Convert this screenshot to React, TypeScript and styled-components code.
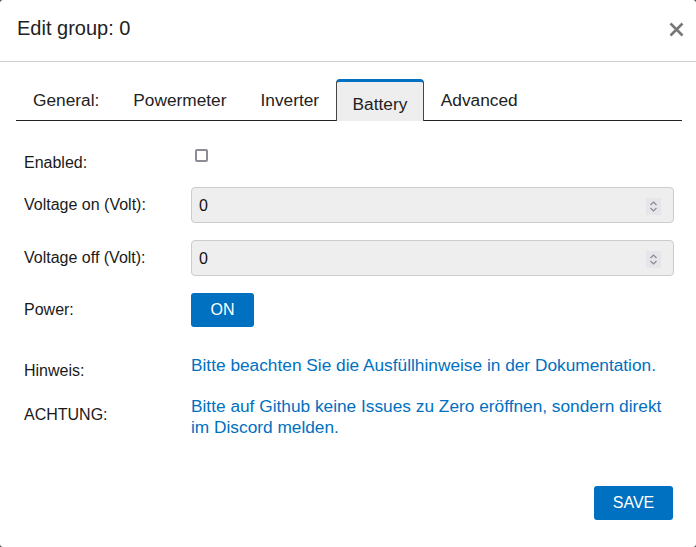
import React from "react";
import styled, { createGlobalStyle } from "styled-components";

const Global = createGlobalStyle`
  html, body { margin: 0; padding: 0; background: #3a3a3a; }
  body { font-family: "Liberation Sans", Arial, sans-serif; }
  * { box-sizing: border-box; }
`;

const Dialog = styled.div`
  width: 696px;
  height: 547px;
  background: #fff;
  border-radius: 3px;
  display: flex;
  flex-direction: column;
  color: #1a1a1a;
`;

const Header = styled.div`
  height: 62px;
  display: flex;
  align-items: center;
  justify-content: space-between;
  padding: 0 10px 4px 17px;
  border-bottom: 1px solid #d0d0d0;
`;

const Title = styled.h2`
  margin: 0;
  font-size: 20px;
  font-weight: normal;
  color: #222;
`;

const Close = styled.button`
  border: 0;
  background: none;
  padding: 0;
  width: 20px;
  height: 20px;
  display: flex;
  align-items: center;
  justify-content: center;
  cursor: pointer;
  margin-top: 1px;
`;

const Body = styled.div`
  padding: 17px 14px 0 16px;
  flex: 1;
  display: flex;
  flex-direction: column;
`;

const TabBar = styled.div`
  display: flex;
  align-items: flex-end;
  height: 42px;
  border-bottom: 1px solid #222;
`;

const Tab = styled.div<{ $active?: boolean }>`
  height: ${(p) => (p.$active ? "42px" : "41px")};
  padding: 0 ${(p) => (p.$active ? "15.5px" : "17px")};
  font-size: 17.3px;
  white-space: nowrap;
  display: flex;
  align-items: center;
  color: #222;
  background: ${(p) => (p.$active ? "#eeeeee" : "transparent")};
  border-top: ${(p) => (p.$active ? "3px solid #0070c0" : "none")};
  border-left: ${(p) => (p.$active ? "1px solid #444" : "none")};
  border-right: ${(p) => (p.$active ? "1px solid #444" : "none")};
  border-radius: ${(p) => (p.$active ? "4px 4px 0 0" : "0")};
  margin-bottom: -1px;
  padding-top: ${(p) => (p.$active ? "5px" : "0")};
`;

const Form = styled.div`
  display: flex;
  flex-direction: column;
  padding: 0 0 0 8px;
`;

const Row = styled.div<{ $h: number; $mt: number }>`
  display: flex;
  align-items: center;
  height: ${(p) => p.$h}px;
  margin-top: ${(p) => p.$mt}px;
`;

const Label = styled.div<{ $dy?: number }>`
  width: 167px;
  flex: none;
  font-size: 16px;
  color: #1a1a1a;
  position: relative;
  top: ${(p) => p.$dy ?? 0}px;
`;

const Checkbox = styled.span`
  display: inline-block;
  width: 13px;
  height: 13px;
  border: 2px solid #8c8c96;
  border-radius: 2px;
  margin-left: 4px;
  position: relative;
  top: -8px;
`;

const InputBox = styled.div`
  width: 483px;
  height: 36px;
  background: #eeeeee;
  border: 1px solid #cccccc;
  border-radius: 4px;
  display: flex;
  align-items: center;
  justify-content: space-between;
  padding: 2px 12px 0 7px;
  font-size: 16px;
  color: #111;
`;

const Spinner = styled.span`
  width: 15px;
  height: 17px;
  background: #e6e6ea;
  display: flex;
  align-items: center;
  justify-content: center;
`;

const Button = styled.button<{ $w: number }>`
  width: ${(p) => p.$w}px;
  height: 34px;
  background: #0070c0;
  color: #fff;
  border: 0;
  border-radius: 3px;
  font-family: "Liberation Sans", Arial, sans-serif;
  font-size: 16px;
  padding: 0;
  cursor: pointer;
`;

const Note = styled.div`
  font-size: 17.3px;
  color: #0070c0;
  line-height: 21px;
  width: 482px;
`;

const Footer = styled.div`
  display: flex;
  justify-content: flex-end;
  padding: 0 9px 0 0;
  margin-top: 48px;
`;

const SpinIcon = () => (
  <svg width="9" height="13" viewBox="0 0 9 13">
    <path d="M1.5 5 L4.5 2 L7.5 5" fill="none" stroke="#8a8a96" strokeWidth="1.2" />
    <path d="M1.5 8 L4.5 11 L7.5 8" fill="none" stroke="#8a8a96" strokeWidth="1.2" />
  </svg>
);

export default function App() {
  return (
    <>
      <Global />
      <Dialog>
        <Header>
          <Title>Edit group: 0</Title>
          <Close aria-label="close">
            <svg width="15" height="15" viewBox="0 0 15 15">
              <path d="M1.5 1.5 L13.5 13.5 M13.5 1.5 L1.5 13.5" stroke="#777" strokeWidth="2.6" />
            </svg>
          </Close>
        </Header>
        <Body>
          <TabBar>
            <Tab>General:</Tab>
            <Tab>Powermeter</Tab>
            <Tab>Inverter</Tab>
            <Tab $active>Battery</Tab>
            <Tab>Advanced</Tab>
          </TabBar>
          <Form>
            <Row $h={36} $mt={24}>
              <Label>Enabled:</Label>
              <Checkbox />
            </Row>
            <Row $h={36} $mt={6}>
              <Label>Voltage on (Volt):</Label>
              <InputBox>
                <span>0</span>
                <Spinner><SpinIcon /></Spinner>
              </InputBox>
            </Row>
            <Row $h={36} $mt={17}>
              <Label>Voltage off (Volt):</Label>
              <InputBox>
                <span>0</span>
                <Spinner><SpinIcon /></Spinner>
              </InputBox>
            </Row>
            <Row $h={34} $mt={17}>
              <Label>Power:</Label>
              <Button $w={63}>ON</Button>
            </Row>
            <Row $h={24} $mt={26}>
              <Label $dy={6}>Hinweis:</Label>
              <Note>Bitte beachten Sie die Ausfüllhinweise in der Dokumentation.</Note>
            </Row>
            <Row $h={42} $mt={19}>
              <Label $dy={-2}>ACHTUNG:</Label>
              <Note>Bitte auf Github keine Issues zu Zero eröffnen, sondern direkt im Discord melden.</Note>
            </Row>
          </Form>
          <Footer>
            <Button $w={79}>SAVE</Button>
          </Footer>
        </Body>
      </Dialog>
    </>
  );
}
